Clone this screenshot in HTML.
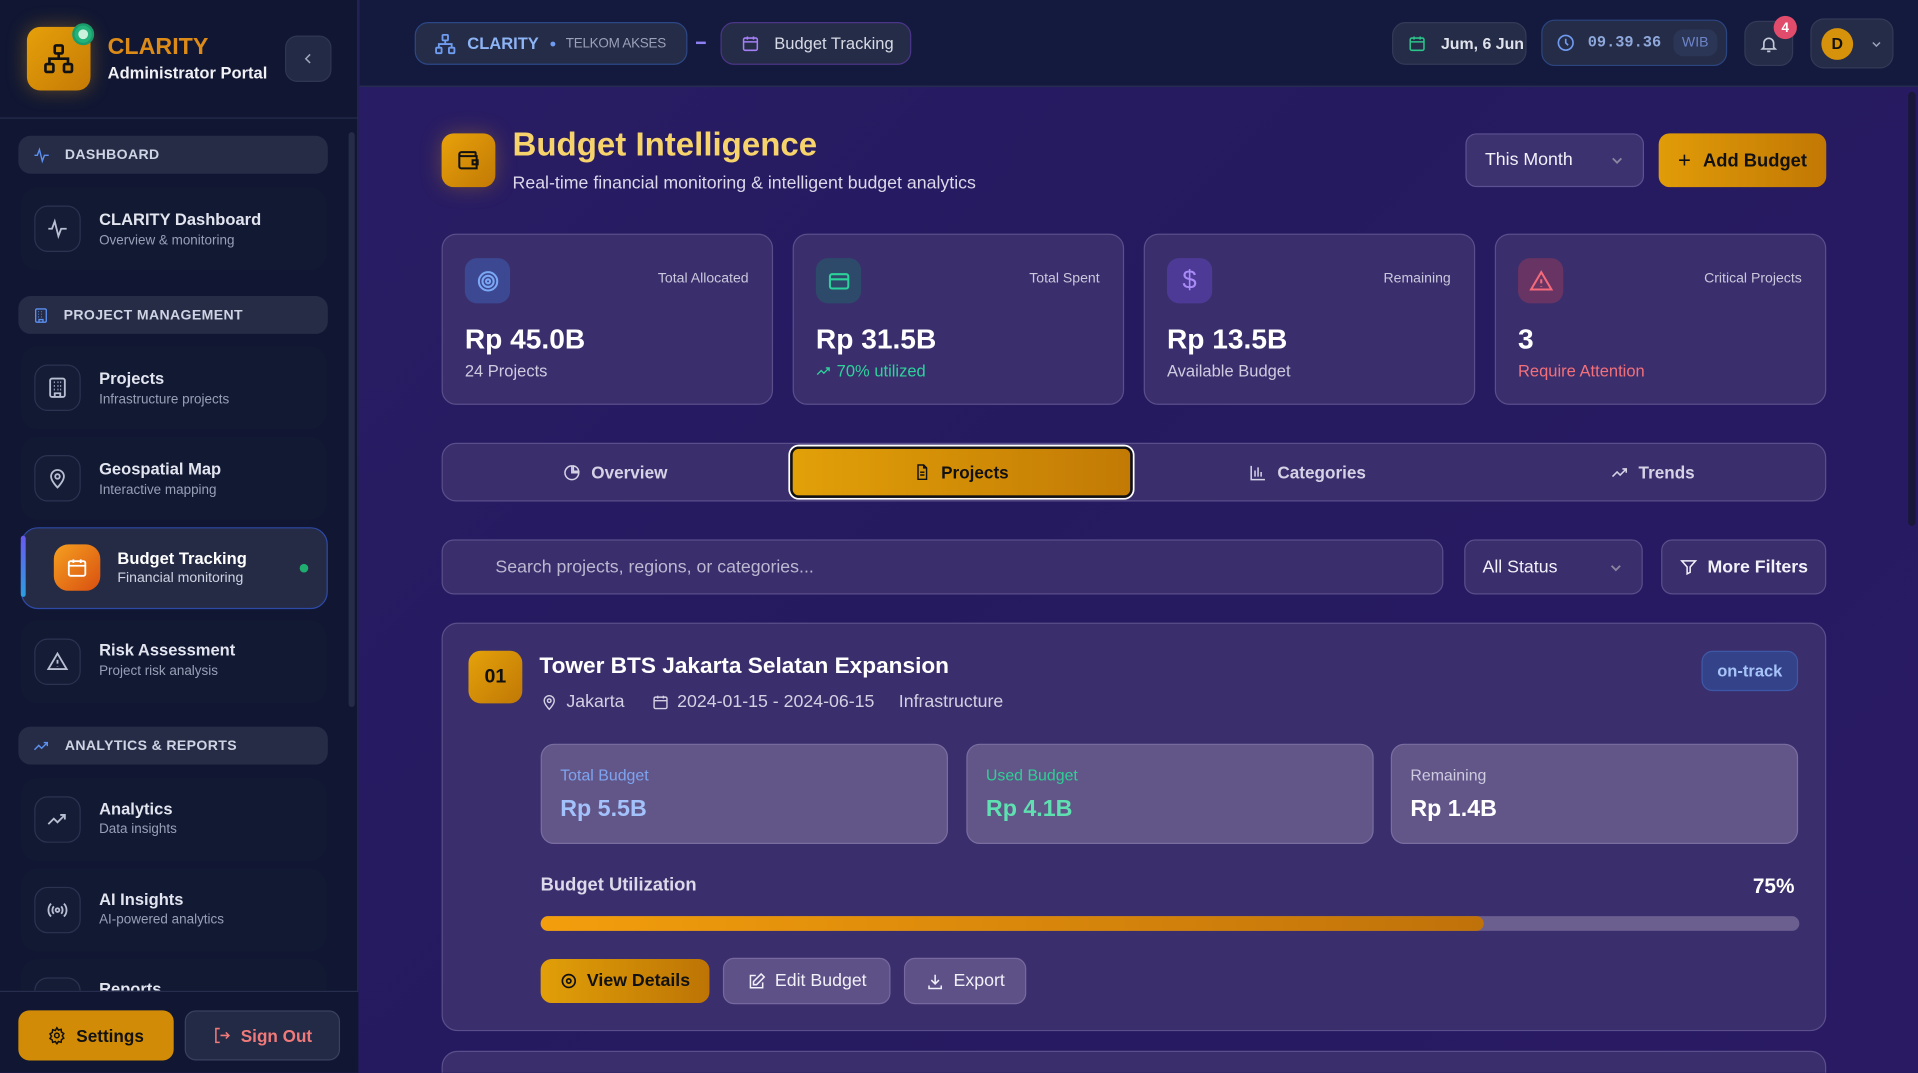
<!DOCTYPE html>
<html><head><meta charset="utf-8"><style>
html,body{margin:0;padding:0;width:1918px;height:1073px;overflow:hidden;background:#221a5c}
*{box-sizing:border-box}
#root{position:absolute;left:0;top:0;width:1568px;height:877px;transform:scale(1.22321);transform-origin:0 0;font-family:"Liberation Sans",sans-serif;color:#e5e7f0;background:linear-gradient(135deg,#2a1d66 0%,#251a60 50%,#2a1a64 100%);overflow:hidden}
.a{position:absolute}
svg{display:block}
.side{left:0;top:0;width:293px;height:877px;background:#111733;border-right:1px solid #232a4c}
.sec{left:15px;width:253px;height:31px;border-radius:10px;background:#262c46;font-size:11.5px;font-weight:bold;letter-spacing:.3px;color:#cfd4e4;display:flex;align-items:center;padding-left:12px;gap:12px}
.item{left:17px;width:250px;height:68px;border-radius:14px;background:#121933}
.item .ic{position:absolute;left:11px;top:15px;width:38px;height:38px;border-radius:11px;border:1px solid #2b3350;background:#151c36;display:flex;align-items:center;justify-content:center}
.item .t{position:absolute;left:64px;top:19px;font-size:13.5px;font-weight:bold;color:#e2e5ef}
.item .s{position:absolute;left:64px;top:38px;font-size:11px;color:#98a0b8}
.top{left:294px;top:0;width:1274px;height:71px;background:#141a3d;border-bottom:1px solid #2a2f55}
.pill{border-radius:11px;background:#252c47;border:1px solid #323a58;display:flex;align-items:center;font-size:13.5px}
.card{border-radius:12px;background:#3a2f6c;border:1px solid #5a4f8a}
.sc .lab{position:absolute;right:19px;top:30px;font-size:11.5px;color:#cbc7dd}
.sc .val{position:absolute;left:18px;top:72px;font-size:23px;font-weight:bold;color:#fff}
.sc .sub{position:absolute;left:18px;top:104px;font-size:13.5px;color:#cfcbe0}
.sc .ib{position:absolute;left:18px;top:19px;width:37px;height:37px;border-radius:10px;display:flex;align-items:center;justify-content:center}
.tab{top:362px;height:48px;display:flex;align-items:center;justify-content:center;gap:8px;font-size:14px;font-weight:bold;color:#d6d2e6}
.btn{border-radius:9px;display:flex;align-items:center;justify-content:center;gap:8px;font-size:14.5px}
.mini{top:608px;height:82px;width:333px;border-radius:11px;background:#625689;border:1px solid #7a6ea0}
.mini .l{position:absolute;left:15px;top:17px;font-size:13px}
.mini .v{position:absolute;left:15px;top:42px;font-size:19px;font-weight:bold}
</style></head><body><div id="root">

<div class="a side">
 <div class="a" style="left:22px;top:22px;width:52px;height:52px;border-radius:11px;background:linear-gradient(135deg,#e6a00a,#c57a05);box-shadow:0 0 16px rgba(230,160,20,.35);display:flex;align-items:center;justify-content:center">
  <svg width="26" height="26" viewBox="0 0 24 24" fill="none" stroke="#111" stroke-width="2"><rect x="9" y="2" width="6" height="6" rx="1"/><rect x="2" y="16" width="6" height="6" rx="1"/><rect x="16" y="16" width="6" height="6" rx="1"/><path d="M12 8v4M5 16v-4h14v4"/></svg>
 </div>
 <div class="a" style="left:59px;top:19px;width:18px;height:18px;border-radius:50%;background:#22b27a;border:2px solid #1a9c6a"><div style="margin:3px;width:8px;height:8px;border-radius:50%;background:#c9f1dc"></div></div>
 <div class="a" style="left:88px;top:28px;font-size:19px;font-weight:bold;color:#dc8a18">CLARITY</div>
 <div class="a" style="left:88px;top:52px;font-size:13.5px;font-weight:bold;color:#f0f0f5">Administrator Portal</div>
 <div class="a" style="left:233px;top:29px;width:38px;height:38px;border-radius:10px;background:#232a45;border:1px solid #2f3652;display:flex;align-items:center;justify-content:center"><svg width="12" height="12" viewBox="0 0 24 24" fill="none" stroke="#a0a7bd" stroke-width="2.5"><path d="M15 5l-7 7 7 7"/></svg></div>
 <div class="a" style="left:0;top:96px;width:293px;height:1px;background:#252c4c"></div>
 <div class="a" style="left:285px;top:108px;width:5px;height:470px;border-radius:3px;background:#262c48"></div>

 <div class="a sec" style="top:111px"><svg width="14" height="14" viewBox="0 0 24 24" fill="none" stroke="#5b8ff0" stroke-width="2"><path d="M2 12h4l3-8 4 16 3-8h6"/></svg>DASHBOARD</div>
 <div class="a item" style="top:153px"><div class="ic"><svg width="18" height="18" viewBox="0 0 24 24" fill="none" stroke="#b8bfd2" stroke-width="2"><path d="M2 12h4l3-8 4 16 3-8h6"/></svg></div><div class="t">CLARITY Dashboard</div><div class="s">Overview &amp; monitoring</div></div>

 <div class="a sec" style="top:242px"><svg width="13" height="14" viewBox="0 0 24 24" fill="none" stroke="#5b8ff0" stroke-width="2"><rect x="4" y="2" width="16" height="20" rx="2"/><path d="M9 22v-4h6v4M8 6h1M12 6h1M16 6h0M8 10h1M12 10h1M16 10h0M8 14h1M12 14h1"/></svg>PROJECT MANAGEMENT</div>
 <div class="a item" style="top:283px"><div class="ic"><svg width="18" height="18" viewBox="0 0 24 24" fill="none" stroke="#b8bfd2" stroke-width="2"><rect x="4" y="2" width="16" height="20" rx="2"/><path d="M9 22v-4h6v4M8 6h1M12 6h1M15 6h1M8 10h1M12 10h1M15 10h1M8 14h1M12 14h1M15 14h1"/></svg></div><div class="t">Projects</div><div class="s">Infrastructure projects</div></div>
 <div class="a item" style="top:357px"><div class="ic"><svg width="18" height="18" viewBox="0 0 24 24" fill="none" stroke="#b8bfd2" stroke-width="2"><path d="M12 22s-7-7-7-12a7 7 0 0114 0c0 5-7 12-7 12z"/><circle cx="12" cy="10" r="2.5"/></svg></div><div class="t">Geospatial Map</div><div class="s">Interactive mapping</div></div>
 <div class="a" style="left:17px;top:431px;width:251px;height:67px;border-radius:14px;background:#252b45;border:1px solid #2e4aa8"></div>
 <div class="a" style="left:17px;top:438px;width:4px;height:50px;border-radius:2px;background:linear-gradient(#6a5af0,#2b9ee0)"></div>
 <div class="a" style="left:44px;top:445px;width:38px;height:38px;border-radius:12px;background:linear-gradient(135deg,#f5a020,#d94f10);display:flex;align-items:center;justify-content:center"><svg width="18" height="18" viewBox="0 0 24 24" fill="none" stroke="#fff" stroke-width="2"><rect x="3" y="5" width="18" height="16" rx="2"/><path d="M3 10h18M8 3v4M16 3v4"/></svg></div>
 <div class="a" style="left:96px;top:449px;font-size:13.5px;font-weight:bold;color:#fff">Budget Tracking</div>
 <div class="a" style="left:96px;top:467px;font-size:11.5px;color:#cfd3e2">Financial monitoring</div>
 <div class="a" style="left:245px;top:461px;width:7px;height:7px;border-radius:50%;background:#1fae70"></div>
 <div class="a item" style="top:507px"><div class="ic"><svg width="18" height="18" viewBox="0 0 24 24" fill="none" stroke="#b8bfd2" stroke-width="2"><path d="M12 3L2 20h20L12 3z"/><path d="M12 10v4M12 17v.5"/></svg></div><div class="t" style="top:17px">Risk Assessment</div><div class="s" style="top:36px">Project risk analysis</div></div>

 <div class="a sec" style="top:594px"><svg width="14" height="14" viewBox="0 0 24 24" fill="none" stroke="#5b8ff0" stroke-width="2"><path d="M2 17l6-6 4 4 8-8M15 7h5v5"/></svg>ANALYTICS &amp; REPORTS</div>
 <div class="a item" style="top:636px"><div class="ic"><svg width="18" height="18" viewBox="0 0 24 24" fill="none" stroke="#b8bfd2" stroke-width="2"><path d="M2 17l6-6 4 4 8-8M15 7h5v5"/></svg></div><div class="t" style="top:18px">Analytics</div><div class="s" style="top:36px">Data insights</div></div>
 <div class="a item" style="top:710px"><div class="ic"><svg width="18" height="18" viewBox="0 0 24 24" fill="none" stroke="#b8bfd2" stroke-width="2"><circle cx="12" cy="12" r="2"/><path d="M8 8a6 6 0 000 8M16 8a6 6 0 010 8M5 5a10 10 0 000 14M19 5a10 10 0 010 14"/></svg></div><div class="t" style="top:18px">AI Insights</div><div class="s" style="top:36px">AI-powered analytics</div></div>
 <div class="a item" style="top:784px;height:26px;overflow:hidden;border-radius:14px 14px 0 0"><div class="t" style="top:17px">Reports</div><div class="ic" style="top:15px"></div></div>
 <div class="a" style="left:0;top:810px;width:293px;height:67px;background:#111733;border-top:1px solid #262d4d"></div>
 <div class="a btn" style="left:15px;top:826px;width:127px;height:41px;background:#d18b06;color:#111;font-weight:bold;font-size:14px"><svg width="15" height="15" viewBox="0 0 24 24" fill="none" stroke="#111" stroke-width="2"><circle cx="12" cy="12" r="3"/><path d="M12 2l2 3 3.5-1 .5 3.5 3 2-2 3 2 3-3 2-.5 3.5-3.5-1-2 3-2-3-3.5 1L6 18l-3-2 2-3-2-3 3-2 .5-3.5 3.5 1z"/></svg>Settings</div>
 <div class="a btn" style="left:151px;top:826px;width:127px;height:41px;background:#232a45;border:1px solid #3a4160;color:#f07a7a;font-weight:bold;font-size:14px"><svg width="15" height="15" viewBox="0 0 24 24" fill="none" stroke="#f07a7a" stroke-width="2"><path d="M9 3H4v18h5M10 12h11M17 8l4 4-4 4"/></svg>Sign Out</div>
</div>

<div class="a top"></div>
<div class="a pill" style="left:339px;top:18px;width:223px;height:35px;border-color:#2c4785;padding-left:15px;gap:9px"><svg width="18" height="18" viewBox="0 0 24 24" fill="none" stroke="#6f9cf0" stroke-width="2"><rect x="9" y="2" width="6" height="6" rx="1"/><rect x="2" y="16" width="6" height="6" rx="1"/><rect x="16" y="16" width="6" height="6" rx="1"/><path d="M12 8v4M5 16v-4h14v4"/></svg><b style="color:#8db4f5;font-size:13.5px">CLARITY</b><span style="width:4px;height:4px;border-radius:50%;background:#6f9cf0"></span><span style="color:#9aa1b8;font-size:11px;letter-spacing:-.2px">TELKOM AKSES</span></div>
<div class="a" style="left:569px;top:34px;width:8px;height:2px;background:#8e7ff5"></div>
<div class="a pill" style="left:589px;top:18px;width:156px;height:35px;border-color:#4b3588;padding-left:16px;gap:12px;color:#d8dbe6"><svg width="15" height="15" viewBox="0 0 24 24" fill="none" stroke="#a47ff5" stroke-width="2"><rect x="3" y="5" width="18" height="16" rx="2"/><path d="M3 10h18M8 3v4M16 3v4"/></svg>Budget Tracking</div>
<div class="a pill" style="left:1138px;top:18px;width:110px;height:35px;padding-left:12px;gap:12px;color:#e0e3ec;font-weight:bold;font-size:13px"><svg width="15" height="15" viewBox="0 0 24 24" fill="none" stroke="#2bc48a" stroke-width="2"><rect x="3" y="5" width="18" height="16" rx="2"/><path d="M3 10h18M8 3v4M16 3v4"/></svg>Jum, 6 Jun</div>
<div class="a pill" style="left:1260px;top:16px;width:152px;height:38px;border-color:#2b4580;padding-left:11px;gap:10px"><svg width="16" height="16" viewBox="0 0 24 24" fill="none" stroke="#6f9cf0" stroke-width="2"><circle cx="12" cy="12" r="9"/><path d="M12 7v5l3 3"/></svg><b style="font-family:'Liberation Mono',monospace;color:#8fa8dc;font-size:12.5px">09.39.36</b><span style="background:#2b3556;border-radius:8px;padding:5px 7px;color:#6d85c8;font-size:11.5px">WIB</span></div>
<div class="a pill" style="left:1426px;top:17px;width:40px;height:37px;justify-content:center"><svg width="16" height="16" viewBox="0 0 24 24" fill="none" stroke="#c4c9d8" stroke-width="2"><path d="M6 16V11a6 6 0 0112 0v5l2 2H4l2-2zM10 21h4"/></svg></div>
<div class="a" style="left:1450px;top:13px;width:19px;height:19px;border-radius:50%;background:#e24c6c;color:#fff;font-size:11px;font-weight:bold;display:flex;align-items:center;justify-content:center">4</div>
<div class="a pill" style="left:1480px;top:15px;width:68px;height:41px;padding-left:8px;gap:14px"><span style="width:26px;height:26px;border-radius:50%;background:#d6920a;color:#111;font-size:13px;font-weight:bold;display:flex;align-items:center;justify-content:center">D</span><svg width="10" height="10" viewBox="0 0 24 24" fill="none" stroke="#9aa1b8" stroke-width="3"><path d="M5 9l7 7 7-7"/></svg></div>
<div class="a" style="left:1560px;top:75px;width:6px;height:355px;border-radius:3px;background:#1a1838"></div>

<div class="a" style="left:361px;top:109px;width:44px;height:44px;border-radius:10px;background:linear-gradient(135deg,#e8a10a,#c27a05);box-shadow:0 0 18px rgba(230,160,20,.3);display:flex;align-items:center;justify-content:center"><svg width="20" height="20" viewBox="0 0 24 24" fill="none" stroke="#111" stroke-width="2"><path d="M19 7V5a1 1 0 00-1-1H5a2 2 0 000 4h15v12H5a2 2 0 01-2-2V6"/><path d="M16 12h5v4h-5z"/></svg></div>
<div class="a" style="left:419px;top:103px;font-size:27px;font-weight:bold;color:#f6d36b">Budget Intelligence</div>
<div class="a" style="left:419px;top:142px;font-size:14.5px;color:#dcd8ea">Real-time financial monitoring &amp; intelligent budget analytics</div>
<div class="a btn" style="left:1198px;top:109px;width:146px;height:44px;background:#3d3270;border:1px solid #5d5290;color:#f2f0f8;justify-content:space-between;padding:0 15px"><span>This Month</span><svg width="12" height="12" viewBox="0 0 24 24" fill="none" stroke="#8a86a0" stroke-width="3"><path d="M5 9l7 7 7-7"/></svg></div>
<div class="a btn" style="left:1356px;top:109px;width:137px;height:44px;background:linear-gradient(90deg,#e19c08,#c27804);color:#111;font-weight:bold;font-size:15px;gap:10px"><span style="font-size:18px;font-weight:normal">+</span>Add Budget</div>

<div class="a card sc" style="left:361px;top:191px;width:271px;height:140px"><div class="ib" style="background:#3c4891"><svg width="20" height="20" viewBox="0 0 24 24" fill="none" stroke="#7aa8f5" stroke-width="2"><circle cx="12" cy="12" r="9"/><circle cx="12" cy="12" r="5.5"/><circle cx="12" cy="12" r="2"/></svg></div><div class="lab">Total Allocated</div><div class="val">Rp 45.0B</div><div class="sub">24 Projects</div></div>
<div class="a card sc" style="left:648px;top:191px;width:271px;height:140px"><div class="ib" style="background:#2e4a6b"><svg width="20" height="20" viewBox="0 0 24 24" fill="none" stroke="#2bd29a" stroke-width="2"><rect x="3" y="5" width="18" height="14" rx="2"/><path d="M3 10h18"/></svg></div><div class="lab">Total Spent</div><div class="val">Rp 31.5B</div><div class="sub" style="color:#2ed39c;display:flex;gap:4px;align-items:center"><svg width="13" height="13" viewBox="0 0 24 24" fill="none" stroke="#2ed39c" stroke-width="2"><path d="M2 17l6-6 4 4 8-8M15 7h5v5"/></svg>70% utilized</div></div>
<div class="a card sc" style="left:935px;top:191px;width:271px;height:140px"><div class="ib" style="background:#4d3a96"><span style="color:#a88bf7;font-size:21px">$</span></div><div class="lab">Remaining</div><div class="val">Rp 13.5B</div><div class="sub">Available Budget</div></div>
<div class="a card sc" style="left:1222px;top:191px;width:271px;height:140px"><div class="ib" style="background:#673464"><svg width="20" height="20" viewBox="0 0 24 24" fill="none" stroke="#f46a7a" stroke-width="2"><path d="M12 3L2 20h20L12 3z"/><path d="M12 10v4M12 17v.5"/></svg></div><div class="lab">Critical Projects</div><div class="val">3</div><div class="sub" style="color:#f2707a">Require Attention</div></div>

<div class="a card" style="left:361px;top:362px;width:1132px;height:48px"></div>
<div class="a tab" style="left:361px;width:284px"><svg width="15" height="15" viewBox="0 0 24 24" fill="none" stroke="#d6d2e6" stroke-width="2"><path d="M21 12a9 9 0 11-9-9v9z"/><path d="M14 3a8 8 0 017 7h-7z"/></svg>Overview</div>
<div class="a tab" style="left:646px;top:365px;width:280px;height:42px;border-radius:7px;background:linear-gradient(90deg,#e2a008,#c27a05);border:2px solid #111;box-shadow:0 0 0 1.5px #fff;color:#111"><svg width="14" height="14" viewBox="0 0 24 24" fill="none" stroke="#111" stroke-width="2"><path d="M14 2H6v20h12V6z"/><path d="M14 2v4h4M9 12h6M9 16h6"/></svg>Projects</div>
<div class="a tab" style="left:928px;width:282px"><svg width="15" height="15" viewBox="0 0 24 24" fill="none" stroke="#d6d2e6" stroke-width="2"><path d="M3 3v18h18M8 17V9M12 17V5M16 17v-6"/></svg>Categories</div>
<div class="a tab" style="left:1210px;width:282px"><svg width="15" height="15" viewBox="0 0 24 24" fill="none" stroke="#d6d2e6" stroke-width="2"><path d="M2 17l6-6 4 4 8-8M15 7h5v5"/></svg>Trends</div>

<div class="a card" style="left:361px;top:441px;width:819px;height:45px;display:flex;align-items:center;padding-left:43px;font-size:14.5px;color:#bdb8d2;border-radius:10px">Search projects, regions, or categories...</div>
<div class="a btn" style="left:1197px;top:441px;width:146px;height:45px;background:#3a2f6c;border:1px solid #5a4f8a;color:#f2f0f8;justify-content:space-between;padding:0 15px 0 14px"><span>All Status</span><svg width="12" height="12" viewBox="0 0 24 24" fill="none" stroke="#8a86a0" stroke-width="3"><path d="M5 9l7 7 7-7"/></svg></div>
<div class="a btn" style="left:1358px;top:441px;width:135px;height:45px;background:#3a2f6c;border:1px solid #5a4f8a;color:#f2f0f8;font-weight:bold"><svg width="15" height="15" viewBox="0 0 24 24" fill="none" stroke="#f2f0f8" stroke-width="2"><path d="M3 4h18l-7 8v7l-4 2v-9z"/></svg>More Filters</div>

<div class="a card" style="left:361px;top:509px;width:1132px;height:334px;border-radius:13px"></div>
<div class="a" style="left:383px;top:532px;width:44px;height:43px;border-radius:10px;background:linear-gradient(135deg,#e5a20a,#c07805);color:#111;font-size:16px;font-weight:bold;display:flex;align-items:center;justify-content:center">01</div>
<div class="a" style="left:441px;top:533px;font-size:18.5px;font-weight:bold;color:#fff">Tower BTS Jakarta Selatan Expansion</div>
<div class="a" style="left:442px;top:566px;display:flex;align-items:center;gap:7px;font-size:14.5px;color:#d4d0e3"><svg width="14" height="14" viewBox="0 0 24 24" fill="none" stroke="#d4d0e3" stroke-width="2"><path d="M12 22s-7-7-7-12a7 7 0 0114 0c0 5-7 12-7 12z"/><circle cx="12" cy="10" r="2.5"/></svg>Jakarta<span style="width:8px"></span><svg width="14" height="14" viewBox="0 0 24 24" fill="none" stroke="#d4d0e3" stroke-width="2"><rect x="3" y="5" width="18" height="16" rx="2"/><path d="M3 10h18M8 3v4M16 3v4"/></svg>2024-01-15 - 2024-06-15<span style="width:6px"></span>Infrastructure</div>
<div class="a" style="left:1391px;top:532px;width:79px;height:33px;border-radius:9px;background:#34428a;border:1px solid #3e58a8;color:#a6c4f8;font-size:13.5px;font-weight:bold;display:flex;align-items:center;justify-content:center">on-track</div>
<div class="a mini" style="left:442px"><div class="l" style="color:#7ea4f0">Total Budget</div><div class="v" style="color:#a3c1fb">Rp 5.5B</div></div>
<div class="a mini" style="left:790px"><div class="l" style="color:#2fcf95">Used Budget</div><div class="v" style="color:#5fe0b0">Rp 4.1B</div></div>
<div class="a mini" style="left:1137px"><div class="l" style="color:#cfcbe0">Remaining</div><div class="v" style="color:#fff">Rp 1.4B</div></div>
<div class="a" style="left:442px;top:715px;font-size:15px;font-weight:bold;color:#ddd9ea">Budget Utilization</div>
<div class="a" style="left:1433px;top:715px;font-size:17px;font-weight:bold;color:#fff">75%</div>
<div class="a" style="left:442px;top:749px;width:1029px;height:12px;border-radius:6px;background:#6a5f8e"></div>
<div class="a" style="left:442px;top:749px;width:771px;height:12px;border-radius:6px;background:linear-gradient(90deg,#f39e0c,#c0720a)"></div>
<div class="a btn" style="left:442px;top:784px;width:138px;height:36px;background:linear-gradient(90deg,#e19f08,#bd7405);color:#111;font-weight:bold"><svg width="14" height="14" viewBox="0 0 24 24" fill="none" stroke="#111" stroke-width="2.4"><circle cx="12" cy="12" r="9"/><circle cx="12" cy="12" r="3"/></svg>View Details</div>
<div class="a btn" style="left:591px;top:783px;width:137px;height:38px;background:#5d5188;border:1px solid #77699f;color:#f2f0f8"><svg width="15" height="15" viewBox="0 0 24 24" fill="none" stroke="#f2f0f8" stroke-width="2"><path d="M11 4H4v16h16v-7"/><path d="M18 2l4 4-10 10H8v-4z"/></svg>Edit Budget</div>
<div class="a btn" style="left:739px;top:783px;width:100px;height:38px;background:#5d5188;border:1px solid #77699f;color:#f2f0f8"><svg width="15" height="15" viewBox="0 0 24 24" fill="none" stroke="#f2f0f8" stroke-width="2"><path d="M12 3v12M7 10l5 5 5-5M4 17v4h16v-4"/></svg>Export</div>
<div class="a card" style="left:361px;top:859px;width:1132px;height:40px;border-radius:13px"></div>
</div></body></html>
